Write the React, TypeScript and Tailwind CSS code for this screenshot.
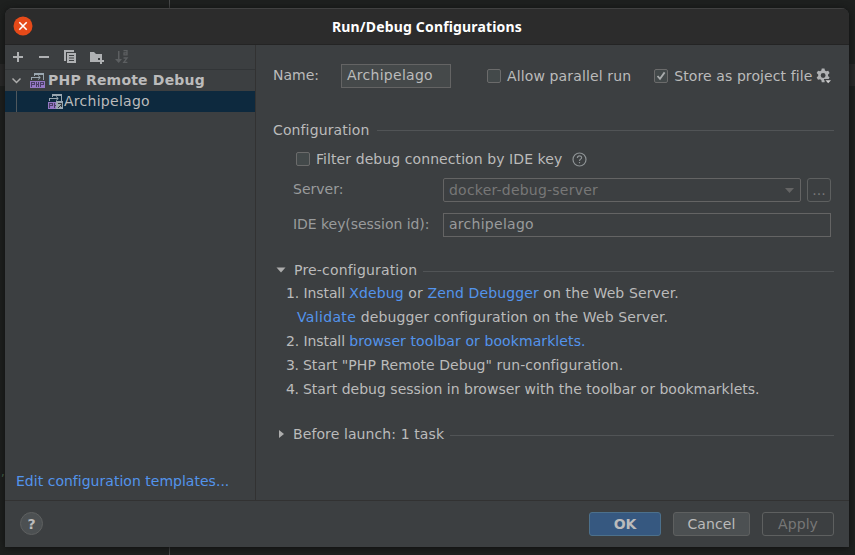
import React from "react";

const Rule = () => <div className="h-px flex-1 bg-[#515456]" />;

const Check = ({ on = false }: { on?: boolean }) => (
  <span className="flex size-3.5 shrink-0 items-center justify-center rounded-[2px] border border-[#6b6b6b] bg-[#43494a]">
    {on && (
      <svg width="12" height="12" viewBox="0 0 12 12" fill="none" stroke="#a9acad" strokeWidth="1.8">
        <path d="M2.5 6 5 8.8 9.6 2.4" />
      </svg>
    )}
  </span>
);

const Link = ({ children }: { children: React.ReactNode }) => (
  <span className="text-[#5394ec]">{children}</span>
);

const PhpIcon = ({ template = false }: { template?: boolean }) => (
  <svg width="16" height="16" viewBox="0 0 16 16" className="shrink-0" shapeRendering="crispEdges">
    <path d="M4 0h10v7h-1V2H5v1H4zM1 4h3v1H2v2H1z" fill="#9aa7b0" />
    <path d="M4 4.5h6M8 2.4l2.3 2.1L8 6.6" fill="none" stroke="#9aa7b0" shapeRendering="auto" />
    <path d="M0 8h15v7H0z" fill="#9478c4" />
    <path fillRule="evenodd" d="M1 9h4v3H2v2H1zM2 10v1h2v-1zM6 9h1v2h1V9h1v5H8v-2H7v2H6zM10 9h4v3h-3v2h-1zM11 10v1h2v-1z" fill="#4a3f66" />
    {template && (
      <>
        <path d="M8 7h7v8H8z" fill="#9aa7b0" />
        <path d="M10 9h4v4h-1v-3h-3zM12 11h1v1h-1zM11 12h1v1h-1zM10 13h1v1h-1z" fill="#32383c" />
      </>
    )}
  </svg>
);

const gearPath =
  "M6 0h3l.5 2.2 1.4.8 2.2-.7 1.5 2.6-1.7 1.6v1.6l1.7 1.6-1.5 2.6-2.2-.7-1.4.8L9 15H6l-.5-2.6-1.4-.8-2.2.7L.4 9.7l1.7-1.6V6.5L.4 4.9l1.5-2.6 2.2.7 1.4-.8zM7.5 4.8a2.7 2.7 0 1 0 0 5.4 2.7 2.7 0 0 0 0-5.4z";

export default function App() {
  return (
    <div className="relative h-[555px] w-[855px] overflow-hidden bg-[#1e201f] font-['DejaVu_Sans',sans-serif] text-[14px] leading-[20px] whitespace-nowrap text-[#bbbbbb]">
      <div className="absolute top-0 left-[169px] h-full w-px bg-[#48494a]" />
      <div className="absolute top-16 left-0 h-[22px] w-full bg-[#292929]" />
      <div className="absolute top-[464px] left-px text-[12px] leading-4 text-[#507052]">,</div>
      <div className="absolute top-2 left-[5px] flex h-[539px] w-[844px] flex-col overflow-hidden rounded-t-lg bg-[#3c3f41] shadow-[0_1px_7px_#101010]">
        <header className="relative flex h-[37px] shrink-0 items-center justify-center border-t border-b border-t-[#414141] border-b-[#242424] bg-[#2c2c2c] font-bold text-white">
          <svg className="absolute top-[7px] left-2" width="20" height="20" viewBox="0 0 20 20">
            <circle cx="10" cy="10" r="9.5" fill="#e64a19" />
            <path d="m6.3 6.3 7.4 7.4m0-7.4-7.4 7.4" stroke="white" strokeWidth="1.6" />
          </svg>
          <span className="font-['Noto_Sans',sans-serif] text-[14px] tracking-[0.16px]">Run/Debug Configurations</span>
        </header>
        <div className="flex h-[456px] shrink-0 border-b border-[#323232]">
          <aside className="flex w-[251px] shrink-0 flex-col border-r border-[#323232]">
            <div className="flex h-[25px] shrink-0 items-center gap-[10px] border-b border-[#323537] pl-[5px] text-[#afb1b3]">
              <svg width="16" height="16" viewBox="0 0 16 16"><path d="M3 7h4V3h2v4h4v2H9v4H7V9H3z" fill="#afb1b3" /></svg>
              <svg width="16" height="16" viewBox="0 0 16 16"><path d="M3 7h10v2H3z" fill="#afb1b3" /></svg>
              <svg width="16" height="16" viewBox="0 0 16 16"><path d="M2 1h10v2H4v9H2z" fill="#afb1b3" /><path fillRule="evenodd" d="M5 4h9v10H5zM7 6h5v1H7zm0 2.5h5v1H7zM7 11h5v1H7z" fill="#afb1b3" /></svg>
              <svg width="16" height="16" viewBox="0 0 16 16"><path d="M2 3h4l2 2h6v4h-4v4H2zM12 9h2v2h2v2h-2v2h-2v-2h-2v-2h2z" fill="#afb1b3" /></svg>
              <svg width="16" height="16" viewBox="0 0 16 16"><path d="M4 2h1.5v8H8l-3.3 4L1 10h3z" fill="#5c5f61" /><path d="M9.5 1.7H13v4.2h-3V3.8h3M9.5 9h3.6l-3.3 4.4h3.6" stroke="#5c5f61" strokeWidth="1.3" fill="none" /></svg>
            </div>
            <div className="flex h-[21px] shrink-0 items-center">
              <svg className="ml-1.5 shrink-0" width="12" height="12" viewBox="0 0 12 12"><path d="m1.5 3.5 4 4 4-4" fill="none" stroke="#adadad" strokeWidth="1.5" /></svg>
              <span className="ml-[7px] flex"><PhpIcon /></span>
              <b className="ml-0.5 pb-0.5 tracking-[0.2px]">PHP Remote Debug</b>
            </div>
            <div className="flex h-[21px] shrink-0 items-center bg-[#0d293e]">
              <span className="ml-[11px] h-[21px] w-px bg-[#50585d]" />
              <span className="ml-[31px] flex"><PhpIcon template /></span>
              <span className="pb-0.5 tracking-[0.27px]">Archipelago</span>
            </div>
            <div className="mt-auto mb-[9px] ml-[11px] tracking-[0.02px]"><Link>Edit configuration templates...</Link></div>
          </aside>
          <main className="flex-1 pr-[15px] pl-[17px]">
            <div className="mt-[19px] flex h-6 items-center">
              <span className="w-[68px] pb-0.5">Name:</span>
              <span className="flex h-6 w-[110px] items-center border border-[#646464] bg-[#45494a] pb-0.5 pl-[5px] tracking-[0.27px]">Archipelago</span>
              <span className="ml-9 flex items-center gap-1.5 tracking-[0.13px]"><Check />Allow parallel run</span>
              <span className="ml-[23px] flex items-center gap-1.5 tracking-[0.1px]"><Check on />Store as project file</span>
              <svg className="ml-[4px]" width="16" height="16" viewBox="0 0 16 16"><path d={gearPath} transform="translate(.3 .6) scale(.91)" fill="#afb1b3" fillRule="evenodd" /><path d="M8 11h8v1l-4 4-4-4z" fill="#3c3f41" /><path d="M9.5 12.2h5.5L12.2 15.2z" fill="#d0d0d0" /></svg>
            </div>
            <div className="mt-8 flex h-5 items-center gap-[7px]"><span className="tracking-[0.12px]">Configuration</span><Rule /></div>
            <div className="mt-[9px] ml-[23px] flex h-5 items-center gap-1.5">
              <Check /><span className="tracking-[0.08px]">Filter debug connection by IDE key</span>
              <svg className="ml-1" width="15" height="15" viewBox="0 0 15 15" fill="none" stroke="#8d9294" strokeWidth="1.2"><circle cx="7.5" cy="7.5" r="6.5" /><path d="M5.4 6c0-2.9 4.2-2.7 4.2-.3 0 1.4-2.1 1.5-2.1 3.2m0 1v1.3" /></svg>
            </div>
            <div className="mt-[9px] mr-[3px] ml-5 flex h-6 items-center text-[#999b9c]">
              <span className="w-[150px] pb-0.5">Server:</span>
              <div className="flex h-6 flex-1 items-center justify-between rounded-[2px] border border-[#646464] pr-[6px] pl-[5px] tracking-[0.22px] text-[#777777]">docker-debug-server<svg width="9" height="5" viewBox="0 0 9 5"><path d="M0 0h9L4.5 5z" fill="#646464" /></svg></div>
              <div className="ml-1.5 flex h-6 w-6 items-center justify-center rounded-[3px] border border-[#5e6060] text-[#777777]">...</div>
            </div>
            <div className="mt-[11px] mr-[3px] ml-5 flex h-6 items-center text-[#999b9c]">
              <span className="w-[150px] pb-0.5 tracking-[-0.05px]">IDE key(session id):</span>
              <div className="flex h-6 flex-1 items-center border border-[#646464] pb-0.5 pl-[5px] tracking-[0.27px]">archipelago</div>
            </div>
            <div className="mt-[23px] flex h-5 items-center">
              <svg className="ml-[3px]" width="10" height="6" viewBox="0 0 10 6"><path d="M.5 .5h9L5 5.5z" fill="#adadad" /></svg>
              <span className="mr-1.5 ml-2 tracking-[0.18px]">Pre-configuration</span><div className="mt-0.5 flex flex-1"><Rule /></div>
            </div>
            <div className="mt-px ml-[13px] leading-6">
              <div><span className="tracking-[-0.1px]">1. Install </span><span className="tracking-[0.12px]"><Link>Xdebug</Link> or <Link>Zend Debugger</Link> on the Web Server.</span></div>
              <div className="pl-[11px]"><span className="tracking-[0.34px]"><Link>Validate</Link></span><span className="tracking-[0.12px]"> debugger configuration on the Web Server.</span></div>
              <div><span className="tracking-[-0.1px]">2. Install </span><span className="tracking-[0.09px]"><Link>browser toolbar or bookmarklets.</Link></span></div>
              <div><span className="tracking-[-0.3px]">3. </span><span className="tracking-[0.05px]">Start "PHP Remote Debug" run-configuration.</span></div>
              <div><span className="tracking-[-0.3px]">4. </span><span className="tracking-[0.015px]">Start debug session in browser with the toolbar or bookmarklets.</span></div>
            </div>
            <div className="mt-[23px] flex h-5 items-center">
              <svg className="ml-[6px]" width="6" height="10" viewBox="0 0 6 10"><path d="M0 1v8l5-4z" fill="#adadad" /></svg>
              <span className="mr-1.5 ml-2 tracking-[0.1px]">Before launch: 1 task</span><div className="mt-0.5 flex flex-1"><Rule /></div>
            </div>
          </main>
        </div>
        <footer className="flex flex-1 items-center pr-[15px] pb-px pl-[15px]">
          <span className="flex size-[23px] items-center justify-center rounded-full border border-[#5e6060] bg-[#4c5052] text-[14px] font-bold">?</span>
          <button className="ml-auto flex h-6 w-[72px] items-center justify-center rounded-[3px] border border-[#4c708c] bg-[#365880] font-bold">OK</button>
          <button className="ml-3 flex h-6 w-[77px] items-center justify-center rounded-[3px] border border-[#5e6060] bg-[#4c5052] tracking-[0.1px]">Cancel</button>
          <button className="ml-3 flex h-6 w-[72px] items-center justify-center rounded-[3px] border border-[#5e6060] tracking-[0.1px] text-[#777777]">Apply</button>
        </footer>
      </div>
    </div>
  );
}
